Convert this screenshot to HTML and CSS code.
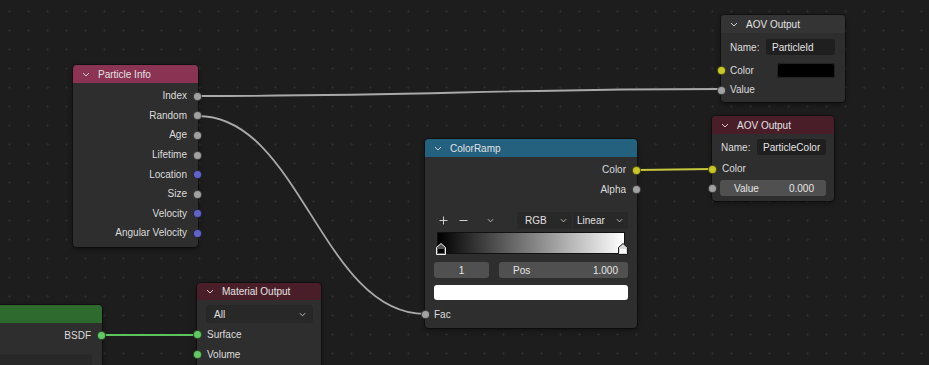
FILE: index.html
```html
<!DOCTYPE html>
<html lang="en">
<head>
    <meta charset="UTF-8">
    <title>Shader Editor - AOV</title>
    <link rel="stylesheet" href="styles.css">
</head>
<body>
    <div class="editor">
        <svg class="links" width="929" height="365" viewBox="0 0 929 365">
            <path class="link" d="M198 96 C 420 96, 500 89, 721 89"/>
            <path class="link" d="M198 116 C 300 116, 322 314, 425 314"/>
            <path class="link link-color" d="M638 170 L 712 169"/>
            <path class="link link-shader" d="M102 335 L 197 335"/>
        </svg>

        <!-- Particle Info -->
        <div class="node node-particle">
            <div class="node-header header-input">
                <svg class="chev" viewBox="0 0 8 5"><path d="M1 1l3 3 3-3"/></svg>
                Particle Info
            </div>
            <div class="node-body">
                <div class="row out">Index<span class="socket grey"></span></div>
                <div class="row out">Random<span class="socket grey"></span></div>
                <div class="row out">Age<span class="socket grey"></span></div>
                <div class="row out">Lifetime<span class="socket grey"></span></div>
                <div class="row out">Location<span class="socket blue"></span></div>
                <div class="row out">Size<span class="socket grey"></span></div>
                <div class="row out">Velocity<span class="socket blue"></span></div>
                <div class="row out">Angular Velocity<span class="socket blue"></span></div>
            </div>
        </div>

        <!-- AOV Output (Index) -->
        <div class="node node-aov-index">
            <div class="node-header header-plain">
                <svg class="chev" viewBox="0 0 8 5"><path d="M1 1l3 3 3-3"/></svg>
                AOV Output
            </div>
            <div class="node-body">
                <div class="row name-row">
                    <span class="label">Name:</span>
                    <span class="field field-text">ParticleId</span>
                </div>
                <div class="row">
                    <span class="socket in yellow"></span>
                    <span class="label">Color</span>
                    <span class="swatch swatch-black"></span>
                </div>
                <div class="row">
                    <span class="socket in grey"></span>
                    <span class="label">Value</span>
                </div>
            </div>
        </div>

        <!-- AOV Output (Color) -->
        <div class="node node-aov-color">
            <div class="node-header header-output">
                <svg class="chev" viewBox="0 0 8 5"><path d="M1 1l3 3 3-3"/></svg>
                AOV Output
            </div>
            <div class="node-body">
                <div class="row name-row">
                    <span class="label">Name:</span>
                    <span class="field field-text">ParticleColor</span>
                </div>
                <div class="row">
                    <span class="socket in yellow"></span>
                    <span class="label">Color</span>
                </div>
                <div class="row">
                    <span class="socket in grey"></span>
                    <span class="field field-num wide">
                        <span>Value</span><span>0.000</span>
                    </span>
                </div>
            </div>
        </div>

        <!-- ColorRamp -->
        <div class="node node-ramp">
            <div class="node-header header-converter">
                <svg class="chev" viewBox="0 0 8 5"><path d="M1 1l3 3 3-3"/></svg>
                ColorRamp
            </div>
            <div class="node-body">
                <div class="row out">Color<span class="socket yellow"></span></div>
                <div class="row out">Alpha<span class="socket grey"></span></div>

                <div class="ramp-tools">
                    <span class="tool">
                        <svg class="tool-icon" viewBox="0 0 9 9"><path d="M4.5 0.5v8M0.5 4.5h8"/></svg>
                    </span>
                    <span class="tool">
                        <svg class="tool-icon" viewBox="0 0 9 9"><path d="M0.5 4.5h8"/></svg>
                    </span>
                    <span class="tool">
                        <svg class="chev small" viewBox="0 0 8 5"><path d="M1 1l3 3 3-3"/></svg>
                    </span>
                    <div class="dropdown-pair">
                        <span class="dropdown">RGB
                            <svg class="chev small" viewBox="0 0 8 5"><path d="M1 1l3 3 3-3"/></svg>
                        </span>
                        <span class="dropdown">Linear
                            <svg class="chev small" viewBox="0 0 8 5"><path d="M1 1l3 3 3-3"/></svg>
                        </span>
                    </div>
                </div>

                <div class="ramp">
                    <div class="ramp-bar"></div>
                    <svg class="stop stop-left" viewBox="0 0 10 12"><path d="M0.5 11.5V4.5l4.5-4 4.5 4v7z"/><rect x="2" y="6" width="6" height="4"/></svg>
                    <svg class="stop stop-right" viewBox="0 0 10 12"><path d="M0.5 11.5V4.5l4.5-4 4.5 4v7z"/><rect x="2" y="6" width="6" height="4"/></svg>
                </div>

                <div class="ramp-fields">
                    <span class="field field-num index-field">1</span>
                    <span class="field field-num pos-field"><span>Pos</span><span>1.000</span></span>
                </div>

                <div class="ramp-color"></div>

                <div class="row">
                    <span class="socket in grey"></span>
                    <span class="label">Fac</span>
                </div>
            </div>
        </div>

        <!-- Principled BSDF (cut off) -->
        <div class="node node-bsdf">
            <div class="node-header header-shader"></div>
            <div class="node-body">
                <div class="row out">BSDF<span class="socket green"></span></div>
                <div class="bsdf-dropdown">
                    <svg class="chev small" viewBox="0 0 8 5"><path d="M1 1l3 3 3-3"/></svg>
                </div>
            </div>
        </div>

        <!-- Material Output -->
        <div class="node node-material">
            <div class="node-header header-output">
                <svg class="chev" viewBox="0 0 8 5"><path d="M1 1l3 3 3-3"/></svg>
                Material Output
            </div>
            <div class="node-body">
                <div class="select">All
                    <svg class="chev small" viewBox="0 0 8 5"><path d="M1 1l3 3 3-3"/></svg>
                </div>
                <div class="row">
                    <span class="socket in green"></span>
                    <span class="label">Surface</span>
                </div>
                <div class="row">
                    <span class="socket in green"></span>
                    <span class="label">Volume</span>
                </div>
            </div>
        </div>
    </div>
</body>
</html>
```

FILE: styles.css
```css
body {
    margin: 0;
    padding: 0;
    background-color: #1d1d1d;
    font-family: 'Liberation Sans', Arial, sans-serif;
    font-size: 10px;
    color: #dcdcdc;
}

.editor {
    position: relative;
    width: 929px;
    height: 365px;
    overflow: hidden;
    background-color: #1d1d1d;
    background-image: radial-gradient(circle, #2b2b2b 1px, transparent 1.3px);
    background-size: 19px 19px;
    background-position: 0px 2px;
}

/* links */
.links {
    position: absolute;
    left: 0;
    top: 0;
}

.link {
    fill: none;
    stroke: #a9a9a9;
    stroke-width: 1.8;
}

.link-color {
    stroke: #c8c83c;
    stroke-width: 2;
}

.link-shader {
    stroke: #5ec25e;
    stroke-width: 2;
}

/* nodes */
.node {
    position: absolute;
    background-color: #2e2e2e;
    border-radius: 4px;
    box-shadow: 0 0 0 1px rgba(0,0,0,0.35), 0 2px 5px rgba(0,0,0,0.45);
}

.node-header {
    height: 18px;
    display: flex;
    align-items: center;
    padding-left: 9px;
    border-radius: 4px 4px 0 0;
    color: #e2e2e2;
}

.header-input { background-color: #8a3352; }
.header-output { background-color: #4a1e29; }
.header-plain { background-color: #343434; }
.header-converter { background-color: #24617f; }
.header-shader { background-color: #2e6a2e; }

.chev {
    width: 8px;
    height: 5px;
    margin-right: 8px;
    fill: none;
    stroke: #cfcfcf;
    stroke-width: 1;
}

.chev.small {
    width: 7px;
    height: 5px;
    margin: 0;
}

.node-body {
    position: relative;
}

.row {
    position: relative;
    height: 20px;
    display: flex;
    align-items: center;
    padding: 0 9px;
}

.row.out {
    justify-content: flex-end;
    padding-right: 11px;
}

.label {
    color: #dcdcdc;
}

/* sockets */
.socket {
    position: absolute;
    top: 50%;
    right: -4px;
    width: 7px;
    height: 7px;
    margin-top: -4px;
    border-radius: 50%;
    border: 0.5px solid rgba(0,0,0,0.6);
}

.socket.in {
    right: auto;
    left: -4px;
}

.grey { background-color: #a1a1a1; }
.blue { background-color: #6363c7; }
.yellow { background-color: #c7c729; }
.green { background-color: #63c763; }

/* fields */
.field {
    height: 16px;
    display: flex;
    align-items: center;
    border-radius: 3px;
    box-sizing: border-box;
}

.field-text {
    margin-left: auto;
    background-color: #1f1f1f;
    padding-left: 6px;
    color: #e4e4e4;
}

.field-num {
    background-color: #505050;
    color: #e6e6e6;
    padding: 0 10px 0 10px;
    justify-content: space-between;
}

.swatch {
    margin-left: auto;
    height: 15px;
    border-radius: 3px;
}

.swatch-black {
    width: 58px;
    background-color: #000;
    box-shadow: inset 0 0 0 1px #222;
}

/* particle info */
.node-particle {
    left: 73px;
    top: 65px;
    width: 125px;
}

.node-particle .node-body {
    padding: 3px 0 4px;
}

.node-particle .row {
    height: 19.6px;
}

/* AOV outputs */
.node-aov-index {
    left: 721px;
    top: 15px;
    width: 124px;
}

.node-aov-index .node-body {
    padding: 4px 0 3px;
}

.node-aov-index .name-row {
    margin-bottom: 3px;
}

.node-aov-index .row {
    padding-right: 10px;
}

.node-aov-index .field-text {
    width: 69px;
}

.node-aov-index .row:last-child {
    height: 19px;
}

.node-aov-color {
    left: 712px;
    top: 116px;
    width: 122px;
}

.node-aov-color .node-body {
    padding: 3px 0 3px;
}

.node-aov-color .row {
    padding: 0 8px;
}

.node-aov-color .name-row {
    margin-bottom: 2px;
    padding-left: 9px;
}

.node-aov-color .field-text {
    width: 69px;
}

.node-aov-color .row:nth-child(2) {
    height: 19px;
    padding-left: 10px;
}

.field-num.wide {
    width: 100%;
    height: 16px;
    padding: 0 12px 0 14px;
}

/* color ramp */
.node-ramp {
    left: 425px;
    top: 139px;
    width: 212px;
    height: 189px;
}

.node-ramp .node-body {
    padding: 3px 9px 4px 9px;
}

.node-ramp .row {
    padding: 0;
}

.node-ramp .row.out {
    margin-right: -9px;
    padding-right: 11px;
    height: 19.5px;
}

.node-ramp .socket.in {
    left: -13px;
}

.ramp-tools {
    display: flex;
    align-items: center;
    height: 17px;
    margin-top: 13px;
}

.tool {
    width: 21px;
    display: flex;
    justify-content: center;
    align-items: center;
    margin-left: -1px;
}

.tool:nth-child(3) {
    margin-left: 6px;
}

.tool-icon {
    width: 9px;
    height: 9px;
    fill: none;
    stroke: #cfcfcf;
    stroke-width: 1;
}

.dropdown-pair {
    display: flex;
    margin-left: auto;
    gap: 1px;
}

.dropdown {
    width: 55px;
    height: 17px;
    box-sizing: border-box;
    display: flex;
    align-items: center;
    justify-content: space-between;
    padding: 0 5px 0 7px;
    background-color: #282828;
    color: #e0e0e0;
}

.dropdown:first-child {
    border-radius: 3px 0 0 3px;
    padding-left: 8px;
}

.dropdown:last-child {
    border-radius: 0 3px 3px 0;
    padding-left: 4px;
}

.ramp {
    position: relative;
    height: 21px;
    margin: 4px 4px 0 4px;
}

.ramp-bar {
    height: 20px;
    background: linear-gradient(to right, #000, #fff);
    box-shadow: 0 0 0 1px #111;
}

.stop {
    position: absolute;
    top: 10px;
    width: 10px;
    height: 12px;
}

.stop-left {
    left: -2px;
}

.stop-left path {
    fill: #555;
    stroke: #f0f0f0;
    stroke-width: 1;
}

.stop-left rect {
    fill: #000;
}

.stop-right {
    right: -4px;
}

.stop-right path {
    fill: #d8d8d8;
    stroke: #1a1a1a;
    stroke-width: 1;
}

.stop-right rect {
    fill: #fff;
}

.ramp-fields {
    display: flex;
    gap: 10px;
    margin-top: 8px;
}

.index-field {
    width: 55px;
    justify-content: center;
}

.pos-field {
    flex: 1;
    padding: 0 10px 0 14px;
}

.ramp-color {
    height: 15px;
    margin-top: 7px;
    background-color: #fff;
    border-radius: 3px;
}

.node-ramp .node-body > .row:last-child {
    margin-top: 4px;
}

/* BSDF */
.node-bsdf {
    left: -30px;
    top: 305px;
    width: 132px;
    height: 80px;
}

.node-bsdf .row {
    margin-top: 2px;
}

.bsdf-dropdown {
    margin: 9px 10px 0 0;
    height: 17px;
    background-color: #282828;
    border-radius: 3px;
    display: flex;
    justify-content: flex-end;
    align-items: flex-end;
    padding-right: 3px;
}

/* material output */
.node-material {
    left: 197px;
    top: 283px;
    width: 124px;
    height: 100px;
}

.node-material .node-header {
    height: 17px;
}

.select {
    margin: 6px 9px 2px 10px;
    height: 16px;
    background-color: #282828;
    border-radius: 3px;
    display: flex;
    align-items: center;
    justify-content: space-between;
    padding: 0 6px 0 7px;
    color: #e2e2e2;
    box-shadow: 0 0 0 1px #262626;
}

.node-material .row {
    padding-left: 10px;
}
```
